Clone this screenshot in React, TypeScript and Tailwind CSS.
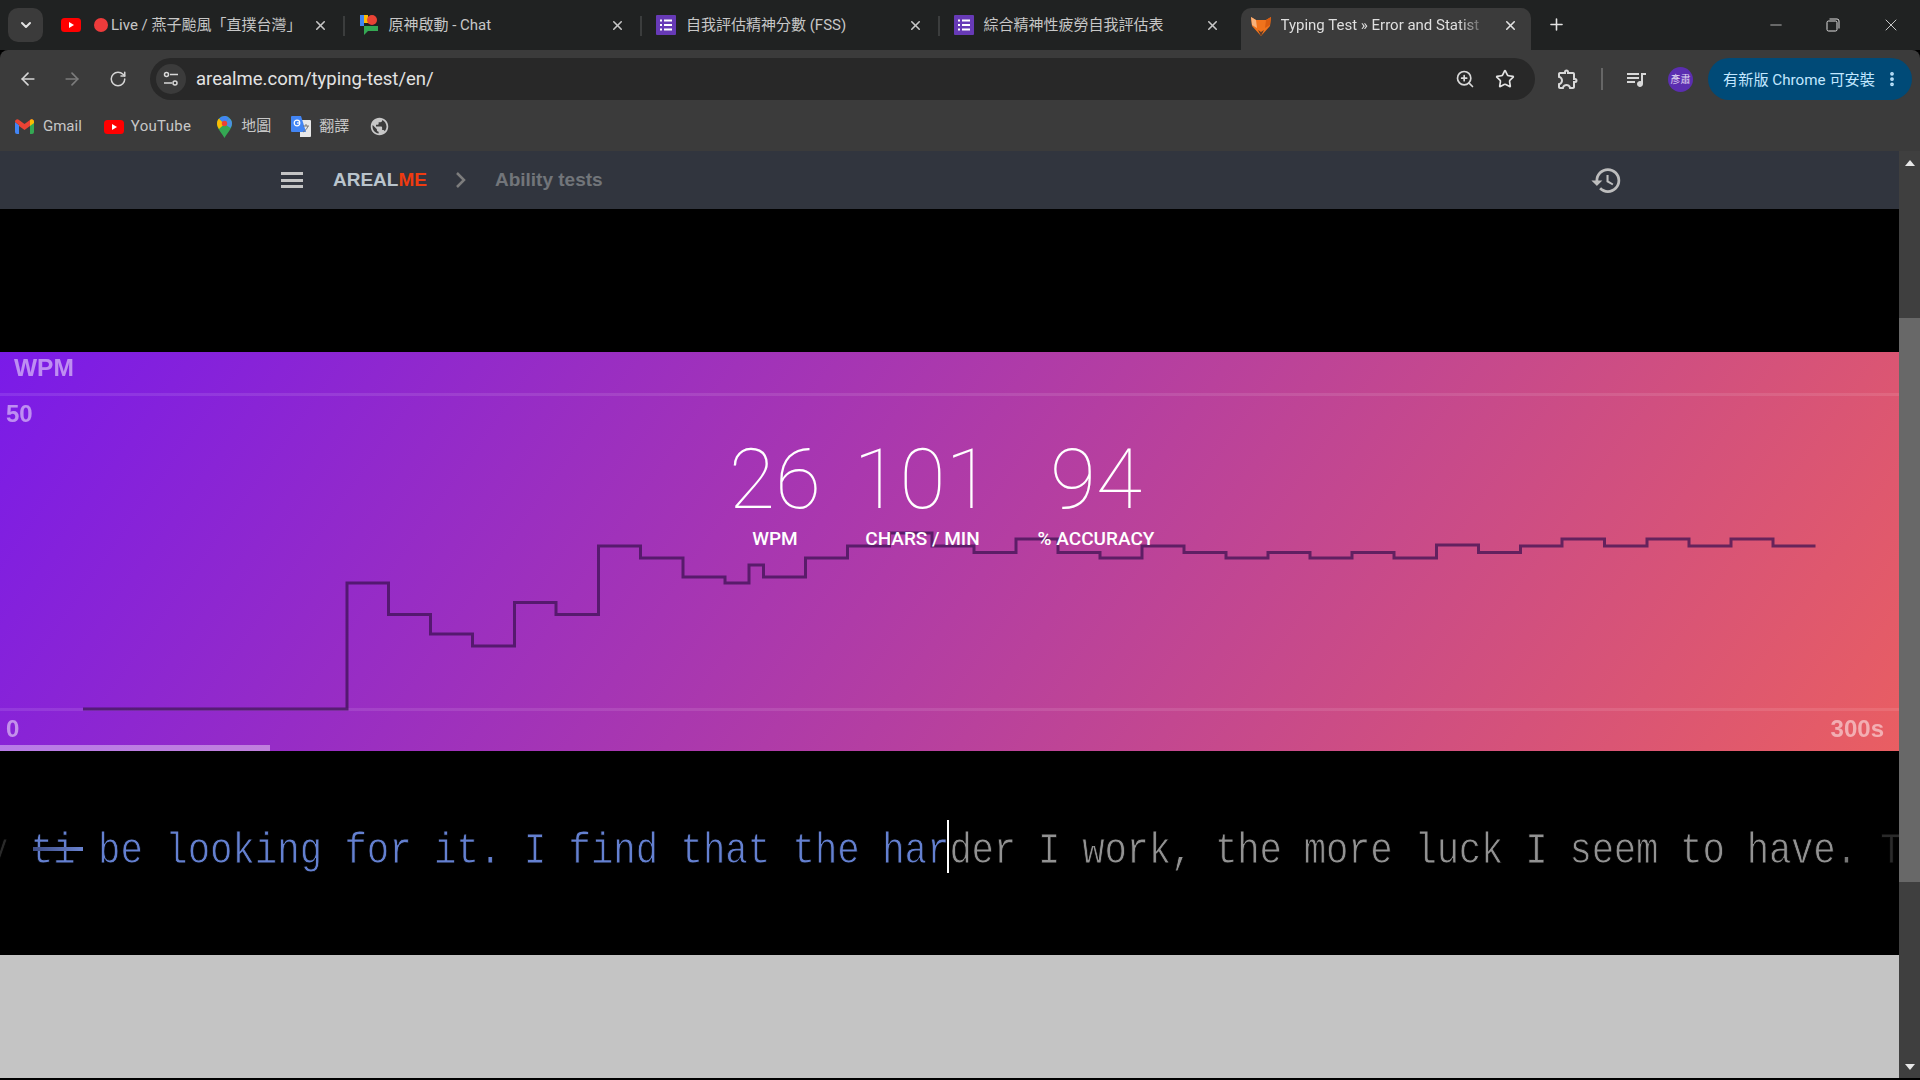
import React from "react";
import { ArrowLeft, ArrowRight, RotateCw, ZoomIn, Star, Plus, X, Minus, ChevronDown, EllipsisVertical } from "lucide-react";
import { MdHistory, MdOutlineExtension, MdOutlineQueueMusic, MdPublic } from "react-icons/md";

const Youtube = ({ w = 20, h = 14 }: { w?: number; h?: number }) => (
  <svg width={w} height={h} viewBox="0 0 20 14"><rect width="20" height="14" rx="3.5" fill="#ff0000" /><path d="M8 4l5 3-5 3z" fill="#fff" /></svg>
);
const Forms = () => (
  <svg width="20" height="20" viewBox="0 0 20 20"><rect width="20" height="20" fill="#673ab7" rx="1" /><path d="M8 5.5h8M8 10h8M8 14.5h8" stroke="#fff" strokeWidth="2" /><path d="M4 5.5h2M4 10h2M4 14.5h2" stroke="#fff" strokeWidth="2" /></svg>
);
const Chat = () => (
  <svg width="18" height="20" viewBox="0 0 18 20">
    <path d="M0 0h8v8H0z" fill="#fbbc04" /><path d="M0 8h4v12l4-4h10v-5H4V8z" fill="#34a853" /><path d="M0 0h4v11H0z" fill="#4285f4" /><circle cx="12" cy="5" r="5" fill="#ea4335" />
  </svg>
);
const Fox = () => (
  <svg width="20" height="20" viewBox="0 0 20 20">
    <path d="M0 1l5 3h10l5-3-1 9-9 10-9-10z" fill="#f0731c" /><path d="M0 1l5 3 1 8-5-3z" fill="#f9b27a" /><path d="M20 1l-5 3-1 8 5-3z" fill="#d85c10" /><path d="M7 14l3 6 3-6-3 2z" fill="#5a3a2a" />
  </svg>
);
const Gmail = () => (
  <svg width="19" height="15" viewBox="0 0 19 15">
    <path d="M0 3v10a2 2 0 0 0 2 2h2V6z" fill="#4285f4" /><path d="M19 3v10a2 2 0 0 1-2 2h-2V6z" fill="#34a853" /><path d="M0 3l4 3v1L9.500 11 15 7V6l4-3c0-2.500-2.500-3.500-4-2L9.500 5 4 1C2.500-.5 0 .5 0 3z" fill="#ea4335" /><path d="M15 1.200V7l4-3V3c0-2.500-2.500-3.500-4-1.800z" fill="#fbbc04" />
  </svg>
);
const MapPin = () => (
  <svg width="15" height="22" viewBox="0 0 15 22">
    <path d="M7.500 22C5 17 0 13 0 7.500a7.500 7.500 0 0 1 15 0C15 13 10 17 7.500 22z" fill="#34a853" /><path d="M2 2.500L7.500 8 2 13C.5 11 0 9 0 7.500 0 5.500.8 3.800 2 2.500z" fill="#fbbc04" /><path d="M2 2.500A7.500 7.500 0 0 1 7.500 0C9 0 11 .5 12 2L7.500 8z" fill="#4285f4" /><path d="M12 2c2 1.500 3 3.500 3 5.500 0 1.500-.5 3-1.500 4.500L7.500 8z" fill="#4a90e2" /><circle cx="7.500" cy="7.500" r="2.700" fill="#ea4335" />
  </svg>
);
const Translate = () => (
  <svg width="20" height="21" viewBox="0 0 20 21">
    <path d="M9 4h10a1 1 0 0 1 1 1v15a1 1 0 0 1-1 1H9z" fill="#e8e8e8" /><path d="M1 0h9l5 16H1a1 1 0 0 1-1-1V1a1 1 0 0 1 1-1z" fill="#4285f4" /><path d="M12 10h6M15 8v2M17 10c-1 3-3 5-5 6" stroke="#777" strokeWidth="1" fill="none" />
    <circle cx="6" cy="7" r="2.800" fill="none" stroke="#fff" strokeWidth="1.200" /><path d="M6 7h3" stroke="#fff" strokeWidth="1.200" />
  </svg>
);
const SiteInfo = () => (
  <svg width="16" height="16" viewBox="0 0 16 16" fill="none" stroke="#d8d8d8" strokeWidth="1.500">
    <circle cx="3.500" cy="3.500" r="2" /><path d="M7 3.500h8" /><circle cx="12" cy="12" r="2" /><path d="M1 12h8" />
  </svg>
);
const Restore = () => (
  <svg width="14" height="14" viewBox="0 0 14 14" fill="none" stroke="#e0e0e0" strokeWidth="1" className="mt-[18px]"><rect x="1" y="3" width="10" height="10" rx="1.500" /><path d="M3.500 1H11a2 2 0 0 1 2 2v7.500" /></svg>
);

const tabs = [
  { icon: <Youtube />, dot: true, title: "Live / 燕子颱風「直撲台灣」" },
  { icon: <Chat />, title: "原神啟動 - Chat" },
  { icon: <Forms />, title: "自我評估精神分數 (FSS)" },
  { icon: <Forms />, title: "綜合精神性疲勞自我評估表" },
];

const pts: [number, number][] = [
  [83, 709], [347, 709], [347, 583], [388.500, 583], [388.500, 614.500], [430.500, 614.500], [430.500, 634], [472.500, 634], [472.500, 646], [514.500, 646], [514.500, 602.500], [556, 602.500], [556, 614.500], [598.500, 614.500], [598.500, 546], [640.500, 546], [640.500, 558], [683, 558], [683, 577], [725, 577], [725, 583], [749, 583], [749, 565], [763.500, 565], [763.500, 577], [805.500, 577], [805.500, 558], [847.500, 558], [847.500, 546], [889.500, 546], [889.500, 533], [932, 533], [932, 546], [974, 546], [974, 552.500], [1016, 552.500], [1016, 539], [1058, 539], [1058, 552.500], [1100, 552.500], [1100, 558], [1142, 558], [1142, 546], [1184, 546], [1184, 552.500], [1226, 552.500], [1226, 558], [1268, 558], [1268, 552.500], [1310, 552.500], [1310, 558], [1352, 558], [1352, 552.500], [1394, 552.500], [1394, 558], [1436.500, 558], [1436.500, 545], [1478.500, 545], [1478.500, 552.500], [1520.500, 552.500], [1520.500, 546], [1562, 546], [1562, 539], [1604.500, 539], [1604.500, 546], [1647, 546], [1647, 539], [1689, 539], [1689, 546], [1731, 546], [1731, 539], [1773, 539], [1773, 546], [1815.500, 546],
];

function Stat({ value, label, w }: { value: string; label: string; w: string }) {
  return (
    <div className={`flex flex-col items-center ${w}`}>
      <div className="text-[84px] leading-[84px] font-thin text-white">{value}</div>
      <div className="mt-[6px] whitespace-nowrap text-[19px] leading-[22px] font-medium text-white">{label}</div>
    </div>
  );
}

export default function App() {
  return (
    <div className="flex flex-col h-screen w-full overflow-hidden bg-black font-['Roboto','Noto_Sans_CJK_TC',sans-serif]">
      {/* Tab strip */}
      <div className="flex h-[50px] shrink-0 bg-[#202222] text-[15px] text-[#c7c7c7]">
        <div className="mt-2 ml-2 mr-[5px] flex h-[34px] w-[35px] items-center justify-center rounded-[10px] bg-[#3b3b3b]">
          <ChevronDown size={16} strokeWidth={3} color="#e3e3e3" />
        </div>
        {tabs.map((t, i) => (
          <div key={i} className="relative flex h-full w-[297.500px] items-center pl-[13px]">
            <div className="flex w-[20px] items-center justify-center">{t.icon}</div>
            <div className="ml-[10px] flex min-w-0 items-center whitespace-nowrap">
              {t.dot && <span className="mr-[3px] ml-[3px] h-[14px] w-[14px] rounded-full bg-[#ee3b3b]" />}
              <span>{t.title}</span>
            </div>
            <X size={15} strokeWidth={2.500} color="#c7c7c7" className="absolute right-[18px] top-[18px]" />
            {i < 3 && <span className="absolute right-[1px] top-[16px] h-[20px] w-[2px] bg-[#3b3d3d]" />}
          </div>
        ))}
        <div className="mt-2 ml-[2.500px] flex h-[42px] w-[290px] items-center rounded-t-[10px] bg-[#3b3b3b] pb-[7px] pl-[10px] text-[#dfdfdf]">
          <Fox />
          <span className="ml-[10px] w-[208px] overflow-hidden whitespace-nowrap [mask-image:linear-gradient(to_right,#000_85%,transparent)]">Typing Test » Error and Statist</span>
          <X size={15} strokeWidth={2.500} color="#e3e3e3" className="ml-[14px]" />
        </div>
        <Plus size={19} strokeWidth={2} color="#e3e3e3" className="mt-[15px] ml-[16px]" />
        <div className="ml-auto flex">
          <Minus size={18} strokeWidth={1} color="#e0e0e0" className="mt-[16px] mr-[41px]" />
          <Restore />
          <X size={20} strokeWidth={1} color="#e8e8e8" className="mt-[15px] mr-[19px] ml-[41px]" />
        </div>
      </div>

      {/* Toolbar */}
      <div className="flex h-[51px] shrink-0 items-start rounded-t-[8px] bg-[#3b3b3b] pt-2">
        <div className="flex h-[42px] items-center pl-[18px]">
          <ArrowLeft size={20} color="#d5d5d5" />
          <ArrowRight size={20} color="#7c7c7c" className="ml-[24px]" />
          <RotateCw size={18} color="#d5d5d5" className="ml-[27px]" />
        </div>
        <div className="ml-[23px] flex h-[42px] w-[1385px] items-center rounded-full bg-[#282828] pl-[6px]">
          <div className="flex h-[30px] w-[30px] items-center justify-center rounded-full bg-[#3b3b3b]"><SiteInfo /></div>
          <span className="ml-[10px] pt-[2px] text-[18.500px] text-[#e3e3e3]">arealme.com/typing-test/en/</span>
          <div className="ml-auto flex items-center gap-[20px] pr-[20px]">
            <ZoomIn size={20} color="#d8d8d8" />
            <Star size={20} color="#e3e3e3" />
          </div>
        </div>
        <div className="flex h-[42px] items-center">
          <MdOutlineExtension size={24} color="#d8d8d8" className="ml-[21px]" />
          <span className="ml-[21px] h-[22px] w-[2px] bg-[#666]" />
          <MdOutlineQueueMusic size={24} color="#d8d8d8" className="ml-[21px]" />
          <div className="ml-[20px] flex h-[25px] w-[25px] items-center justify-center rounded-full bg-[#5b2eb0] text-[10px] text-[#e0d8f0]">彥肅</div>
          <div className="ml-[15px] flex h-[42px] w-[204px] items-center rounded-full bg-[#004a77] pl-[15px] text-[15.200px] text-[#c2e7ff]">
            <span className="whitespace-nowrap pt-[3px]">有新版 Chrome 可安裝</span>
            <EllipsisVertical size={18} strokeWidth={3} color="#c2e7ff" className="ml-[8px]" />
          </div>
        </div>
      </div>

      {/* Bookmarks */}
      <div className="flex h-[50px] shrink-0 items-center bg-[#3b3b3b] pt-[1px] text-[15px] text-[#c7c7c7]">
        <div className="ml-[15px] flex items-center gap-[9px]"><Gmail /><span>Gmail</span></div>
        <div className="ml-[22px] flex items-center gap-[7px]"><Youtube /><span className="tracking-[0.3px]">YouTube</span></div>
        <div className="ml-[26px] flex items-center gap-[9px]"><MapPin /><span>地圖</span></div>
        <div className="ml-[20px] flex items-center gap-[8px]"><Translate /><span>翻譯</span></div>
        <MdPublic size={21} color="#c7c7c7" className="ml-[20px]" />
      </div>

      {/* Page and scrollbar */}
      <div className="flex min-h-0 flex-1">
        <div className="flex min-w-0 flex-1 flex-col font-['Liberation_Sans',sans-serif]">
          <div className="flex h-[58px] shrink-0 items-center bg-[#31353e] pl-[281px]">
            <div className="flex h-[16px] w-[22px] flex-col justify-between">
              <span className="h-[3px] bg-[#c4c4c4]" /><span className="h-[3px] bg-[#c4c4c4]" /><span className="h-[3px] bg-[#c4c4c4]" />
            </div>
            <div className="ml-[30px] text-[19px] font-bold text-[#b9c4cc]">AREAL<span className="text-[#ef3b10]">ME</span></div>
            <svg width="12" height="18" viewBox="0 0 12 18" fill="none" stroke="#7d7d7d" strokeWidth="2.500" className="ml-[28px]"><path d="M2 2l7 7-7 7" /></svg>
            <div className="ml-[28px] text-[19px] font-bold text-[#72757a]">Ability tests</div>
            <MdHistory size={33} color="#bdbdbd" className="ml-[987px]" />
          </div>
          <div className="h-[143px] shrink-0 bg-black" />

          {/* Chart */}
          <div className="relative h-[399px] shrink-0 bg-[linear-gradient(125deg,#7a1be8,#e95e62)]">
            <div className="absolute left-0 right-0 top-[41px] h-[3px] bg-white/10" />
            <div className="absolute left-0 right-0 top-[356px] h-[3px] bg-white/10" />
            <div className="absolute left-[14px] top-[2px] text-[24.500px] font-bold leading-[28px] text-white/50 blur-[0.4px]">WPM</div>
            <div className="absolute left-[6px] top-[48px] text-[24px] font-bold leading-[28px] text-white/50 blur-[0.4px]">50</div>
            <div className="absolute left-[6px] top-[363px] text-[24px] font-bold leading-[28px] text-white/50 blur-[0.4px]">0</div>
            <div className="absolute right-[15px] top-[363px] text-[24px] font-bold leading-[28px] text-white/50 blur-[0.4px]">300s</div>
            <svg className="absolute left-0 top-0" width="1899" height="399" viewBox="0 352 1899 399">
              <polyline points={pts.map((p) => p.join(",")).join(" ")} fill="none" stroke="#3a1050" strokeOpacity="0.72" strokeWidth="3" />
            </svg>
            <div className="absolute bottom-0 left-0 h-[6px] w-[270px] bg-white/40" />
            <div className="absolute left-[701px] top-[86px] flex font-['Roboto',sans-serif]">
              <Stat value="26" label="WPM" w="w-[148px]" />
              <Stat value="101" label="CHARS / MIN" w="w-[147px]" />
              <Stat value="94" label="% ACCURACY" w="w-[200px]" />
            </div>
          </div>

          {/* Typing line */}
          <div className="relative h-[204px] shrink-0 overflow-hidden bg-black">
            <div className="absolute left-[-14px] top-[72px] origin-left scale-x-[0.8485] whitespace-pre font-['Liberation_Mono',monospace] text-[44px] leading-[56px] text-[#929292] [-webkit-text-stroke:0.9px_#000]">
              <span className="text-[#2a2a2a]">y </span>
              <span className="text-[#6480d0]">ti be looking for it. I find that the har</span>
              <span className="tracking-[-0.3px]">der I work, the more luck I seem to have</span>
              <span className="text-[#777]">. </span>
              <span className="text-[#2a2a2a]">T</span>
            </div>
            <div className="absolute left-[33px] top-[96px] h-[4px] w-[50px] bg-gradient-to-r from-[#3d4c85] to-[#6a83d0]" />
            <div className="absolute left-[947px] top-[69px] h-[53px] w-[2px] bg-white" />
          </div>
          <div className="flex-1 bg-[#c4c4c4]" />
        </div>

        <div className="flex w-[21px] shrink-0 flex-col items-center bg-[#3f3f3f]">
          <svg width="12" height="7" viewBox="0 0 12 7" className="mt-[9px]"><path d="M6 0l5 6H1z" fill="#e8e8e8" /></svg>
          <div className="mt-[151px] h-[564px] w-full bg-[#686868]" />
          <svg width="12" height="7" viewBox="0 0 12 7" className="mt-auto mb-[8px]"><path d="M6 7L1 1h10z" fill="#e8e8e8" /></svg>
        </div>
      </div>
      <div className="h-[2px] shrink-0 bg-black" />
    </div>
  );
}
